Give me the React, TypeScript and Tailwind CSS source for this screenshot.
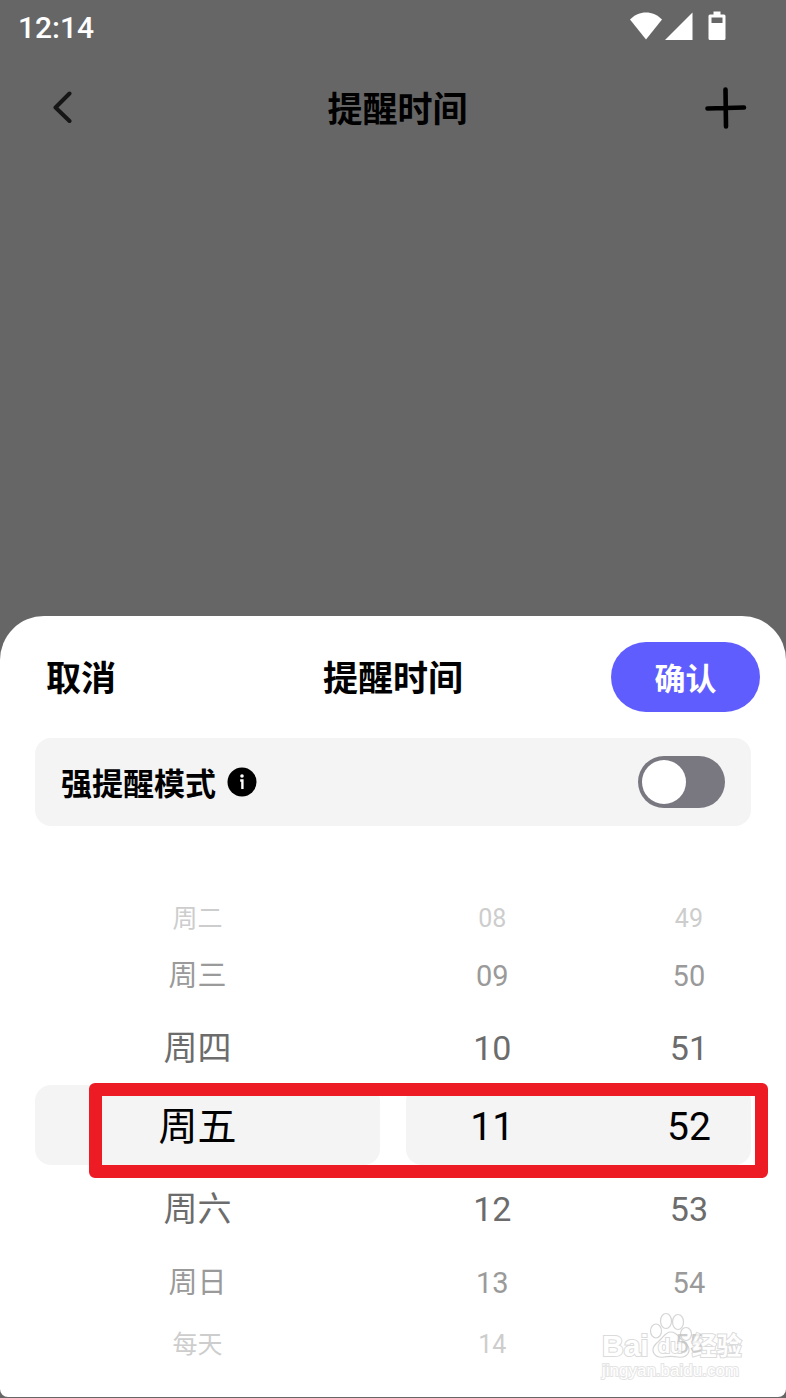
import { useState } from "react";

const rows = [
  { day: "周二", hour: "08", minute: "49", style: "h-[46px] text-[25px] text-[#cdcdcd]" },
  { day: "周三", hour: "09", minute: "50", style: "h-[70px] text-[29px] text-[#9a9a9a]" },
  { day: "周四", hour: "10", minute: "51", style: "h-[74px] text-[34px] text-[#6c6c6c]" },
  { day: "周五", hour: "11", minute: "52", style: "h-[80px] text-[39px] text-black", selected: true },
  { day: "周六", hour: "12", minute: "53", style: "h-[88px] text-[34px] text-[#6c6c6c]" },
  { day: "周日", hour: "13", minute: "54", style: "h-[60px] text-[29px] text-[#9a9a9a]" },
  { day: "每天", hour: "14", minute: "55", style: "h-[62px] text-[25px] text-[#cdcdcd]" },
];

const StatusBar = () => {
  return (
    <div className="flex h-[52px] items-center justify-between pr-[60px] pl-[18px] text-white">
      <span className="pt-1 text-[30px] leading-none font-medium">12:14</span>
      <div className="flex items-center">
        <svg className="h-[30px] w-[34px]" viewBox="0 0 34 30" fill="currentColor">
          <path d="M17 28.500 1 8.500C5.500 4 11 1.500 17 1.500S28.500 4 33 8.500Z" />
        </svg>
        <svg className="ml-[2px] h-[30px] w-[28px]" viewBox="0 0 28 30" fill="currentColor">
          <path d="M27.500 1.500V29H0Z" />
        </svg>
        <svg className="ml-[15px] h-[30px] w-[18px]" viewBox="0 0 18 30" fill="currentColor">
          <path
            fillRule="evenodd"
            d="M5.500 .5h7v3H16a1.500 1.500 0 0 1 1.500 1.500V27.500a1.500 1.500 0 0 1-1.500 1.500H2A1.500 1.500 0 0 1 .5 27.500V5A1.500 1.500 0 0 1 2 3.500h3.500ZM3.500 6.500v5.500h11V6.500Z"
          />
        </svg>
      </div>
    </div>
  );
};

const PageHeader = () => {
  return (
    <header className="flex h-[112px] items-center justify-between pr-[39px] pl-[47px]">
      <button type="button" aria-label="返回" className="flex w-[43px]">
        <svg className="h-[34px] w-[30px]" viewBox="0 0 30 34" fill="none" stroke="#161616" strokeWidth="4" strokeLinecap="round" strokeLinejoin="round">
          <path d="M22.500 2.500 8.500 16.500 22.500 30" />
        </svg>
      </button>
      <h1 className="pt-1 text-[35px] leading-none font-bold">提醒时间</h1>
      <button type="button" aria-label="添加">
        <svg className="h-[42px] w-[42px]" viewBox="0 0 42 42" stroke="#000" strokeWidth="4.600" strokeLinecap="round">
          <path d="M20.500 2.500 21 39.500M2.500 21.500 39 20.500" />
        </svg>
      </button>
    </header>
  );
};

const StrongMode = () => {
  const [on, setOn] = useState(false);

  return (
    <div className="mx-[35px] mt-[26px] flex h-[88px] items-center justify-between rounded-2xl bg-[#f4f4f4] px-[26px]">
      <div className="flex items-center gap-[11px]">
        <label htmlFor="strong" className="pt-1 text-[31px] leading-none font-bold">
          强提醒模式
        </label>
        <svg className="h-[30px] w-[30px]" viewBox="0 0 30 30">
          <circle cx="15" cy="15" r="14.500" fill="#000" />
          <circle cx="15" cy="9" r="1.800" fill="#fff" />
          <path d="M13.200 13.500h2.200v8.500" fill="none" stroke="#fff" strokeWidth="2.400" />
        </svg>
      </div>
      <input
        id="strong"
        type="checkbox"
        role="switch"
        checked={on}
        onChange={() => setOn(!on)}
        className="flex h-[52px] w-[87px] appearance-none items-center rounded-full bg-[#797880] px-1 before:size-11 before:rounded-full before:bg-white checked:justify-end checked:bg-[#605dff]"
      />
    </div>
  );
};

const Wheel = () => {
  return (
    <div className="mt-[69px] px-[35px]">
      {rows.map((row) => (
        <div key={row.day} className={`relative grid grid-cols-2 gap-[26px] leading-none ${row.style}`}>
          <div className={`flex items-center justify-center rounded-2xl pr-5 ${row.selected ? "bg-[#f4f4f4] pt-1" : ""}`}>
            {row.day}
          </div>
          <div className={`flex items-center justify-between rounded-2xl text-center ${row.selected ? "bg-[#f4f4f4] pt-1" : ""}`}>
            <span className="w-1/2">{row.hour}</span>
            <span className="w-[36%]">{row.minute}</span>
          </div>
          {row.selected && (
            <div className="absolute -top-[2px] -right-[17px] -bottom-[13px] left-[54px] rounded-md border-[13px] border-[#ed1c24]" />
          )}
        </div>
      ))}
    </div>
  );
};

const Watermark = () => {
  return (
    <div className="absolute right-[41px] bottom-[17px] w-[143px] text-white opacity-70 [-webkit-text-stroke:2px_#cccccc] [paint-order:stroke_fill]">
      <div className="flex items-end font-bold">
        <span className="font-['Liberation_Sans'] text-[30px] leading-[32px]">Bai</span>
        <div className="relative h-[52px] w-[43px] shrink-0">
          <svg className="h-[52px] w-[43px]" viewBox="0 0 43 52" fill="none" stroke="#c4c4c4" strokeWidth="1.200">
            <ellipse cx="7" cy="21" rx="5.500" ry="7" />
            <ellipse cx="17" cy="11" rx="5.500" ry="7.500" />
            <ellipse cx="29" cy="12" rx="5.500" ry="7.500" />
            <ellipse cx="37" cy="24" rx="5.500" ry="6.500" />
            <path d="M22 22c-5 0-7 4-10 7-4 4-9 7-8 12s6 7 11 6c5-1 9-1 14 0 5 1 10-1 11-6s-4-8-8-12c-3-3-5-7-10-7Z" />
          </svg>
          <span className="absolute inset-x-0 bottom-[6px] text-center font-['Liberation_Sans'] text-[20px] leading-none">du</span>
        </div>
        <span className="text-[25px] leading-[30px]">经验</span>
      </div>
      <div className="font-['Liberation_Sans'] text-[17px] leading-[18px] [-webkit-text-stroke-color:#dadada]">
        jingyan.baidu.com
      </div>
    </div>
  );
};

export default function App() {
  return (
    <div className="flex min-h-screen flex-col bg-[#666] font-[Roboto,'Noto_Sans_CJK_SC',sans-serif] text-black">
      <StatusBar />
      <PageHeader />
      <section className="relative mt-auto mb-px rounded-t-[44px] rounded-b-lg bg-white pt-[26px] pb-[22px]">
        <div className="grid grid-cols-[1fr_auto_1fr] items-center px-[26px]">
          <button type="button" className="justify-self-start pt-1 pl-5 text-[35px] leading-none font-bold">
            取消
          </button>
          <h2 className="pt-1 text-[35px] leading-none font-bold">提醒时间</h2>
          <button type="button" className="h-[70px] w-[149px] justify-self-end rounded-full bg-[#605dff] pt-1 text-[31px] leading-none font-bold text-white">
            确认
          </button>
        </div>
        <StrongMode />
        <Wheel />
        <Watermark />
      </section>
    </div>
  );
}
